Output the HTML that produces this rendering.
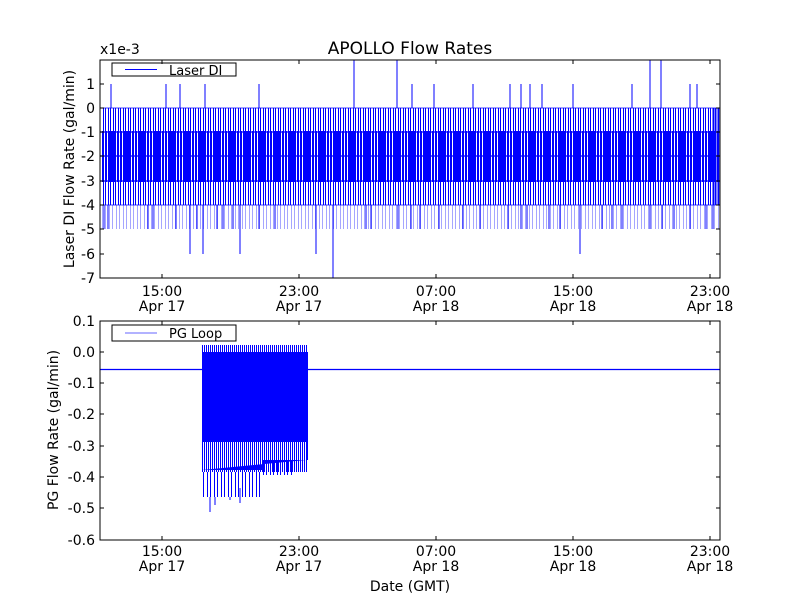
<!DOCTYPE html>
<html><head><meta charset="utf-8"><style>
body{margin:0;background:#fff;width:800px;height:600px;overflow:hidden}
svg text{font-family:"DejaVu Sans","Liberation Sans",sans-serif;fill:#000}
</style></head><body>
<svg width="800" height="600" viewBox="0 0 800 600" xmlns="http://www.w3.org/2000/svg">
<defs>
<pattern id="pA" width="5" height="10" patternUnits="userSpaceOnUse"><rect x="0" y="0" width="1" height="10" fill="#00f"/><rect x="3" y="0" width="1" height="10" fill="#00f"/></pattern>
<pattern id="pB" width="3" height="10" patternUnits="userSpaceOnUse"><rect x="0" y="0" width="2" height="10" fill="#00f"/></pattern>
<pattern id="pC" width="7" height="10" patternUnits="userSpaceOnUse"><rect x="0" y="0" width="1" height="10" fill="#00f"/><rect x="4" y="0" width="1" height="10" fill="#00f"/></pattern>
<pattern id="pD" width="2" height="10" patternUnits="userSpaceOnUse"><rect x="0" y="0" width="1" height="10" fill="#00f"/></pattern>
</defs>
<rect width="800" height="600" fill="#fff"/>
<text x="410" y="54" font-size="17" text-anchor="middle">APOLLO Flow Rates</text>
<text x="100" y="54" font-size="14">x1e-3</text>
<!-- top data -->
<rect x="101" y="108" width="619" height="97" fill="url(#pA)"/>
<rect x="101" y="131" width="619" height="51" fill="url(#pB)"/>
<rect x="101" y="205" width="619" height="24" fill="url(#pC)" opacity="0.35"/>
<g stroke="#00f" stroke-width="1.2">
<line x1="100" y1="132" x2="720" y2="132"/><line x1="100" y1="156" x2="720" y2="156"/><line x1="100" y1="181" x2="720" y2="181"/>
<line x1="100" y1="108" x2="720" y2="108" stroke-width="0.8"/><line x1="100" y1="205" x2="720" y2="205" stroke-width="0.8"/>
</g>
<g stroke="#00f" stroke-width="1">
<path d="M104 205V229M108 205V229M148 205V229M153 205V229M176 205V229M190 205V254M197 205V229M203 205V254M217 205V229M223 205V229M233 205V229M240 205V254M259 205V229M275 205V229M316 205V254M333 205V278M366 205V229M371 205V229M398 205V229M411 205V229M420 205V229M439 205V229M463 205V229M480 205V229M508 205V229M521 205V229M527 205V229M549 205V229M560 205V229M580 205V254M602 205V229M612 205V229M622 205V229M650 205V229M662 205V229M674 205V229M690 205V229M706 205V229M713 205V229"/>
<path d="M111 108V84M166 108V84M180 108V84M205 108V84M259 108V84M354 108V60M397 108V60M412 108V84M434 108V84M473 108V84M510 108V84M521 108V84M530 108V84M542 108V84M573 108V84M632 108V84M650 108V60M661 108V60M690 108V84M697 108V84"/>
</g>
<rect x="712" y="108" width="8" height="97" fill="#00f" opacity="0.5"/>
<!-- bottom data -->
<g stroke="#00f">
<path d="M100 369.5H203M308 369.5H720" stroke-width="1.3"/>
</g>
<rect x="202" y="352" width="106" height="90" fill="#00f"/>
<rect x="202" y="345" width="106" height="8" fill="url(#pD)"/>
<rect x="202" y="442" width="106" height="30" fill="url(#pD)"/>
<path d="M202 470h60v-10h46v-20h-2v20z" fill="#00f"/>
<rect x="203" y="472" width="60" height="25" fill="url(#pC)"/>
<rect x="263" y="460" width="30" height="15" fill="url(#pC)"/>
<path d="M210 497V512M215 497V505M230 497V500M240 488V503" stroke="#00f"/>
<!-- axes -->
<rect x="100" y="60" width="620" height="218" fill="none" stroke="#000" stroke-width="1"/>
<rect x="100" y="321" width="620" height="219" fill="none" stroke="#000" stroke-width="1"/>
<rect x="112" y="63" width="124" height="13" fill="#fff" stroke="#000"/>
<line x1="125" y1="69.5" x2="157" y2="69.5" stroke="#00f"/>
<text x="169" y="75" font-size="13">Laser DI</text>
<rect x="112" y="325" width="124" height="16" fill="#fff" stroke="#000"/>
<line x1="125" y1="333" x2="157" y2="333" stroke="#99f" stroke-width="1.5"/>
<text x="169" y="338" font-size="13">PG Loop</text>
<g font-size="14" text-anchor="end">
<text x="95" y="89">1</text><text x="95" y="113">0</text><text x="95" y="137">-1</text><text x="95" y="161">-2</text><text x="95" y="186">-3</text><text x="95" y="210">-4</text><text x="95" y="234">-5</text><text x="95" y="259">-6</text><text x="95" y="283">-7</text>
<text x="95" y="326">0.1</text><text x="95" y="357">0.0</text><text x="95" y="388">-0.1</text><text x="95" y="419">-0.2</text><text x="95" y="451">-0.3</text><text x="95" y="482">-0.4</text><text x="95" y="513">-0.5</text><text x="95" y="545">-0.6</text>
</g>
<g stroke="#000">
<path d="M100 84h4M100 108h4M100 132h4M100 156h4M100 181h4M100 205h4M100 229h4M100 254h4M720 84h-4M720 108h-4M720 132h-4M720 156h-4M720 181h-4M720 205h-4M720 229h-4M720 254h-4"/>
<path d="M100 352h4M100 383h4M100 414h4M100 446h4M100 477h4M100 508h4M720 352h-4M720 383h-4M720 414h-4M720 446h-4M720 477h-4M720 508h-4"/>
<path d="M162 60v4M299 60v4M436 60v4M573 60v4M710 60v4M162 278v-4M299 278v-4M436 278v-4M573 278v-4M710 278v-4M162 321v4M299 321v4M436 321v4M573 321v4M710 321v4M162 540v-4M299 540v-4M436 540v-4M573 540v-4M710 540v-4"/>
</g>
<g font-size="14" text-anchor="middle">
<text x="162" y="296">15:00</text><text x="162" y="311">Apr 17</text>
<text x="299" y="296">23:00</text><text x="299" y="311">Apr 17</text>
<text x="436" y="296">07:00</text><text x="436" y="311">Apr 18</text>
<text x="573" y="296">15:00</text><text x="573" y="311">Apr 18</text>
<text x="710" y="296">23:00</text><text x="710" y="311">Apr 18</text>
<text x="162" y="556">15:00</text><text x="162" y="571">Apr 17</text>
<text x="299" y="556">23:00</text><text x="299" y="571">Apr 17</text>
<text x="436" y="556">07:00</text><text x="436" y="571">Apr 18</text>
<text x="573" y="556">15:00</text><text x="573" y="571">Apr 18</text>
<text x="710" y="556">23:00</text><text x="710" y="571">Apr 18</text>
</g>
<text transform="translate(74,169) rotate(-90)" font-size="14" text-anchor="middle">Laser DI Flow Rate (gal/min)</text>
<text transform="translate(58,430) rotate(-90)" font-size="14" text-anchor="middle">PG Flow Rate (gal/min)</text>
<text x="410" y="591" font-size="14" text-anchor="middle">Date (GMT)</text>
</svg>
</body></html>
